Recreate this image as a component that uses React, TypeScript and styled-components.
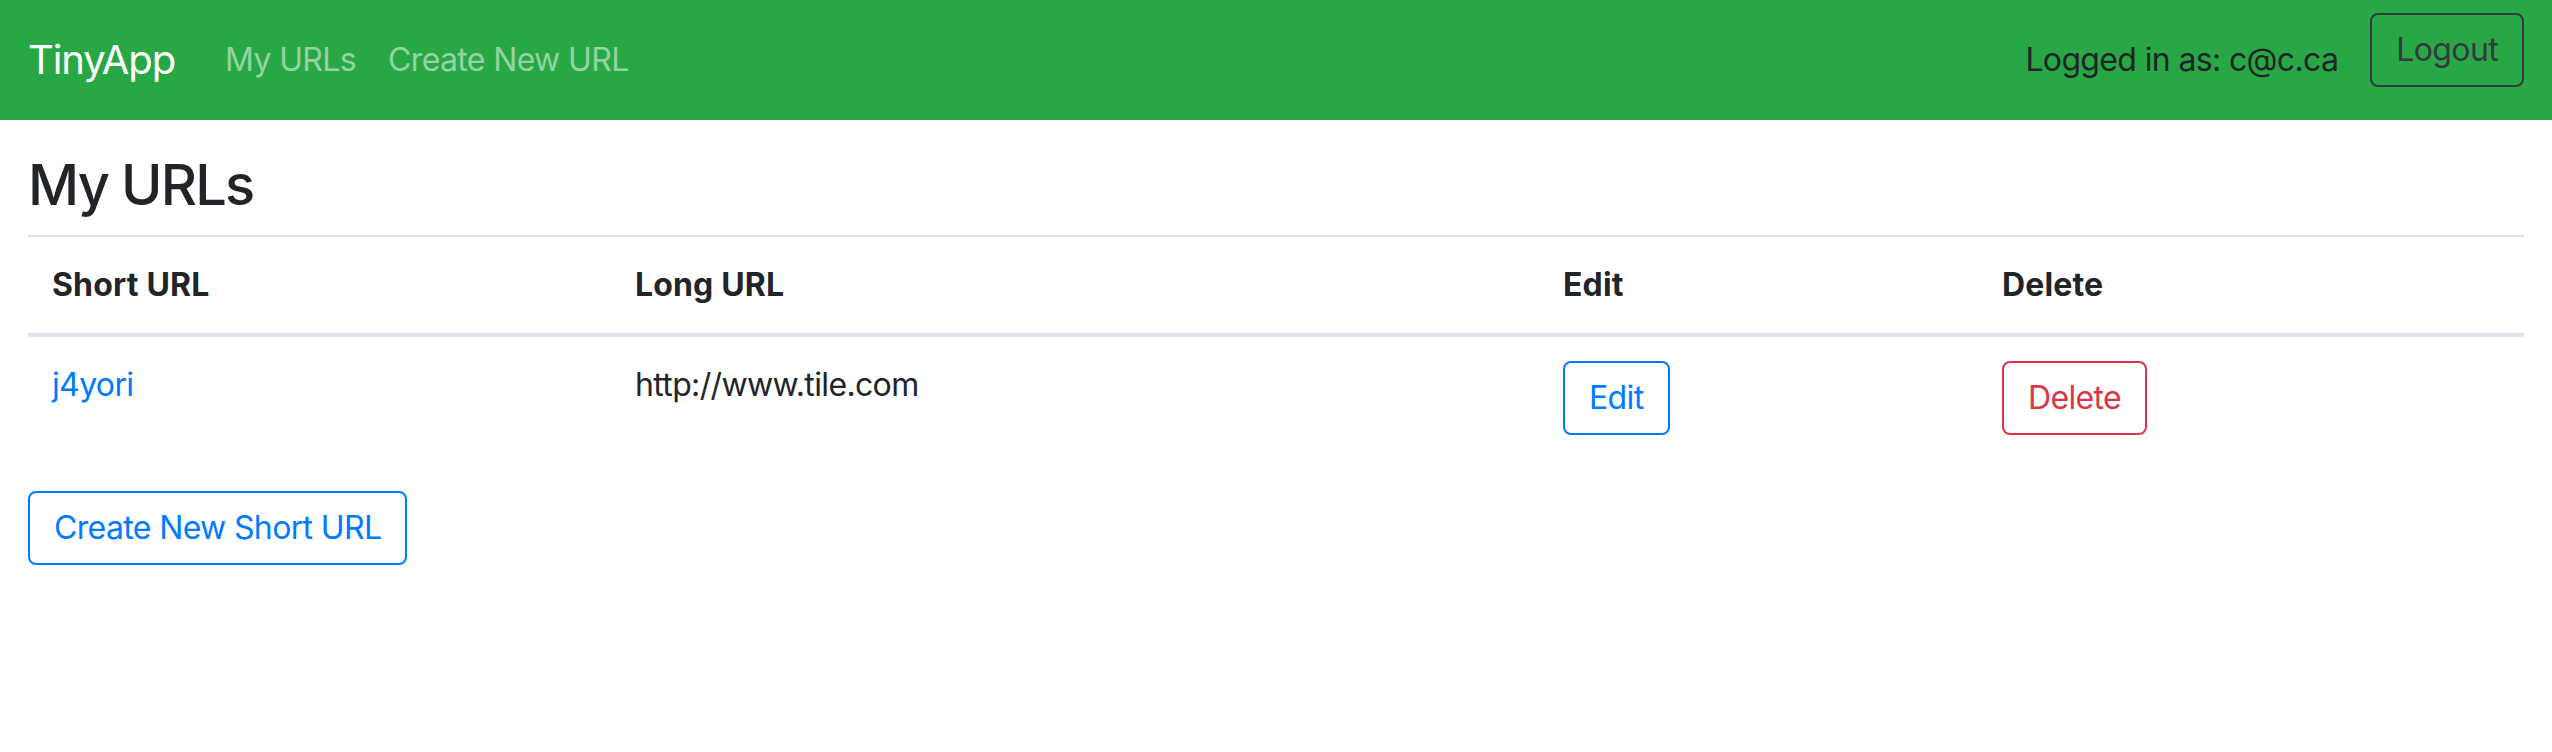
import React from "react";
import styled, { createGlobalStyle } from "styled-components";

const GlobalStyle = createGlobalStyle`
  * { box-sizing: border-box; }
  body {
    margin: 0;
    font-family: Inter, "Noto Sans", "Liberation Sans", sans-serif;
    font-size: 32px;
    line-height: 1.5;
    letter-spacing: -0.02em;
    color: #212529;
    background: #ffffff;
  }
`;

const Navbar = styled.nav`
  display: flex;
  align-items: center;
  height: 120px;
  padding: 0 28px;
  background: #28a745;
`;

const Brand = styled.a`
  font-size: 40px;
  line-height: 60px;
  padding: 10px 0;
  letter-spacing: -0.028em;
  color: #ffffff;
  text-decoration: none;
  margin-right: 34px;
`;

const NavList = styled.div`
  display: flex;
  align-items: center;
`;

const NavLink = styled.a`
  display: block;
  padding: 16px;
  color: rgba(255, 255, 255, 0.5);
  text-decoration: none;
`;

const UserArea = styled.div`
  margin-left: auto;
  display: flex;
  align-items: center;
`;

const UserText = styled.span`
  color: #212529;
  margin-right: 32px;
`;

const colors: Record<string, string> = {
  primary: "#007bff",
  danger: "#dc3545",
  dark: "#343a40",
};

const OutlineButton = styled.button<{ $variant: "primary" | "danger" | "dark"; $lift?: boolean }>`
  font-family: inherit;
  font-size: 32px;
  line-height: 48px;
  letter-spacing: inherit;
  padding: 11px 24px;
  border: 2px solid ${(p) => colors[p.$variant]};
  border-radius: 8px;
  background: transparent;
  color: ${(p) => colors[p.$variant]};
  cursor: pointer;
  margin-bottom: ${(p) => (p.$lift ? "20px" : "0")};
`;

const Main = styled.main`
  padding: 0 28px;
`;

const Title = styled.h3`
  margin: 32px 0 16px;
  font-size: 56px;
  line-height: 1.2;
  font-weight: 500;
  letter-spacing: -0.033em;
`;

const Table = styled.table`
  width: 100%;
  border-collapse: collapse;
  margin-bottom: 32px;
  table-layout: fixed;
`;

const Th = styled.th`
  padding: 24px;
  text-align: left;
  font-weight: 700;
  letter-spacing: 0.005em;
  vertical-align: bottom;
  border-top: 2px solid #dee2e6;
  border-bottom: 4px solid #dee2e6;
`;

const Td = styled.td`
  padding: 24px;
  vertical-align: top;
`;

const ShortLink = styled.a`
  color: #007bff;
  text-decoration: none;
`;

export default function App() {
  return (
    <>
      <GlobalStyle />
      <Navbar>
        <Brand href="#">TinyApp</Brand>
        <NavList>
          <NavLink href="#">My URLs</NavLink>
          <NavLink href="#">Create New URL</NavLink>
        </NavList>
        <UserArea>
          <UserText>Logged in as: c@c.ca</UserText>
          <OutlineButton $variant="dark" $lift>
            Logout
          </OutlineButton>
        </UserArea>
      </Navbar>
      <Main>
        <Title>My URLs</Title>
        <Table>
          <colgroup>
            <col style={{ width: 583 }} />
            <col style={{ width: 928 }} />
            <col style={{ width: 439 }} />
            <col style={{ width: 546 }} />
          </colgroup>
          <thead>
            <tr>
              <Th>Short URL</Th>
              <Th>Long URL</Th>
              <Th>Edit</Th>
              <Th>Delete</Th>
            </tr>
          </thead>
          <tbody>
            <tr>
              <Td>
                <ShortLink href="#">j4yori</ShortLink>
              </Td>
              <Td>http://www.tile.com</Td>
              <Td>
                <OutlineButton $variant="primary">Edit</OutlineButton>
              </Td>
              <Td>
                <OutlineButton $variant="danger">Delete</OutlineButton>
              </Td>
            </tr>
          </tbody>
        </Table>
        <OutlineButton $variant="primary">Create New Short URL</OutlineButton>
      </Main>
    </>
  );
}
